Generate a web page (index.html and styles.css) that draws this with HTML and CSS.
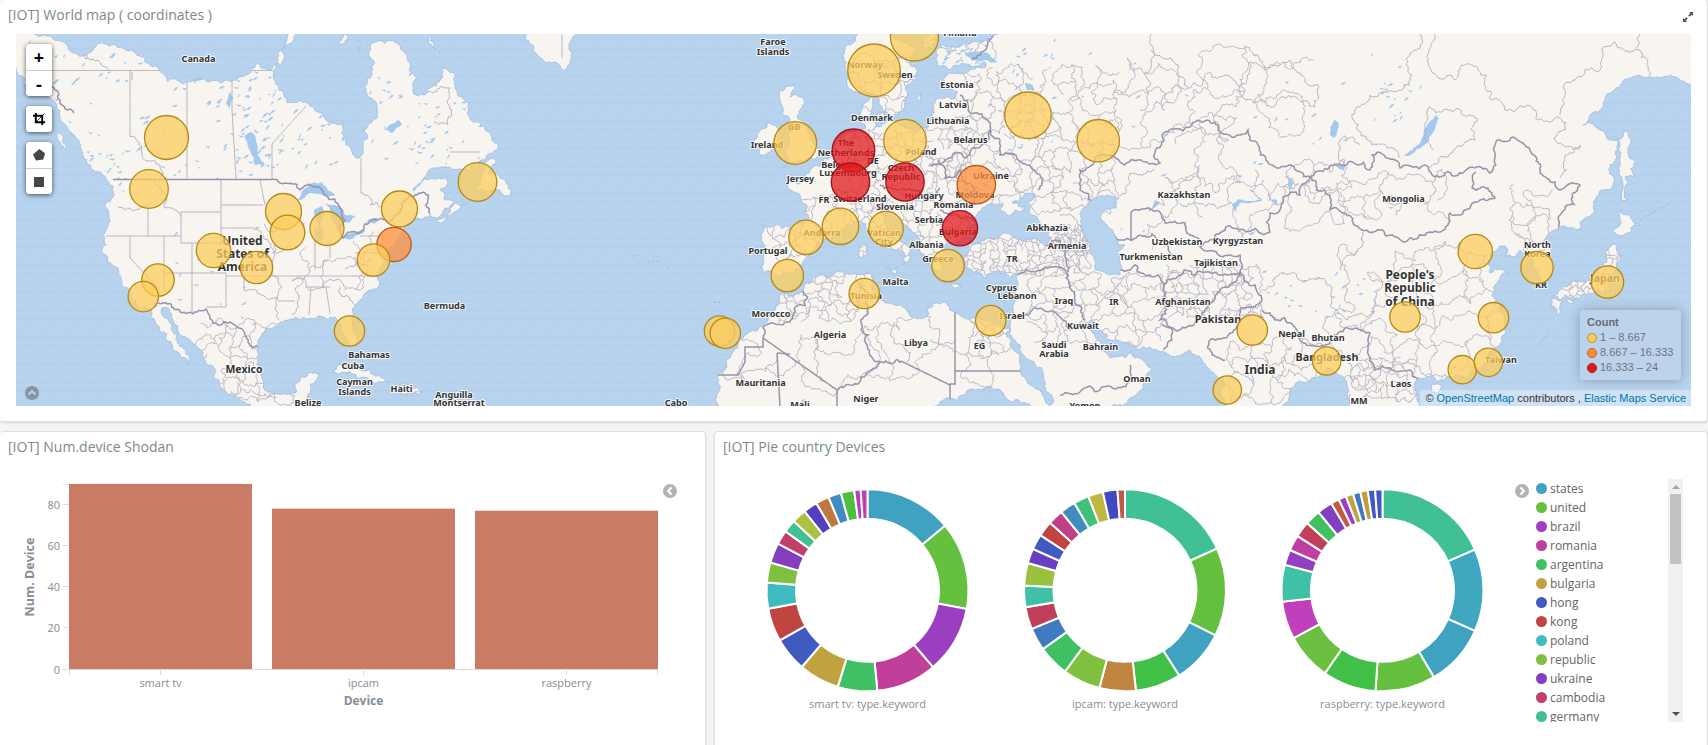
FILE: index.html
```html
<!DOCTYPE html>
<html lang="en">
<head>
<meta charset="utf-8">
<title>IOT dashboard</title>
<link rel="stylesheet" href="styles.css">
</head>
<body>
<main class="dashboard">
  <section class="panel panel-map">
    <header class="panel-head">
      <h2 class="panel-title">[IOT] World map ( coordinates )</h2>
      <svg class="expand" viewBox="0 0 12 12" width="12" height="12"><path d="M7 1h4v4L9.700 3.700 7.600 5.800 6.200 4.400 8.300 2.300zM5 11H1V7l1.300 1.300 2.100-2.100 1.400 1.400-2.100 2.100z"/></svg>
    </header>
    <div class="map">
      <svg id="map" class="map-canvas" viewBox="16 34 1675 372" width="1675" height="372"></svg>
      <div class="map-tools">
        <div class="tool-group"><button class="tool">+</button><button class="tool">-</button></div>
        <div class="tool-group"><button class="tool"><svg viewBox="0 0 12 12" width="12" height="12"><path d="M2.800 0v9.200H12M0 2.800h9.200V12" fill="none" stroke="#000" stroke-width="1.900"/><path d="M3 9l8.500-8.500" stroke="#000" stroke-width=".8"/></svg></button></div>
        <div class="tool-group"><button class="tool"><svg viewBox="0 0 12 12" width="12" height="12"><path d="M6.300 0L12 4.200 10.300 10.500 3 11.500 0 5.500z" fill="#464646"/></svg></button><button class="tool"><svg viewBox="0 0 10 10" width="10" height="10"><path d="M0 0h10v10H0z" fill="#464646"/></svg></button></div>
      </div>
      <svg class="map-toggle" viewBox="0 0 14 14" width="14" height="14"><circle cx="7" cy="7" r="7"/><path d="M3.600 8.500L7 5.200l3.400 3.300"/></svg>
      <div class="map-legend">
        <strong>Count</strong>
        <span class="legend-row"><i class="dot dot-low"></i>1 – 8.667</span>
        <span class="legend-row"><i class="dot dot-mid"></i>8.667 – 16.333</span>
        <span class="legend-row"><i class="dot dot-high"></i>16.333 – 24</span>
      </div>
      <div class="map-credit">© <a>OpenStreetMap</a> contributors , <a>Elastic Maps Service</a></div>
    </div>
  </section>
  <div class="row">
    <section class="panel panel-bars">
      <header class="panel-head"><h2 class="panel-title">[IOT] Num.device Shodan</h2></header>
      <div class="bars-body">
        <svg id="bars" class="chart" viewBox="0 460 660 280" width="660" height="280"></svg>
        <svg class="toggle" viewBox="0 0 14 14" width="14" height="14"><circle cx="7" cy="7" r="7"/><path d="M8.500 3.600L5.200 7l3.300 3.400"/></svg>
      </div>
    </section>
    <section class="panel panel-pies">
      <header class="panel-head"><h2 class="panel-title">[IOT] Pie country Devices</h2></header>
      <div class="pies-body">
        <svg id="pies" class="chart" viewBox="740 460 774 280" width="774" height="280"></svg>
        <svg class="toggle" viewBox="0 0 14 14" width="14" height="14"><circle cx="7" cy="7" r="7"/><path d="M5.500 3.600L8.800 7l-3.300 3.400"/></svg>
        <ul id="names" class="names"></ul>
        <div class="scrollbar"><i class="arrow arrow-up"></i><i class="thumb"></i><i class="arrow arrow-down"></i></div>
      </div>
    </section>
  </div>
</main>
<script src="script.js"></script>
</body>
</html>
```
FILE: styles.css
```css
* { box-sizing: border-box; }
body { margin: 0; background: #f4f4f4; font-family: "Open Sans", "Noto Sans", sans-serif; overflow: hidden; }
.dashboard { display: flex; flex-direction: column; gap: 9px; height: 745px; }
.panel { background: #fff; border: 1px solid #dedede; border-radius: 4px; box-shadow: 0 1px 2px rgba(0,0,0,.12); }
.panel-map { height: 422px; border-top: 0; border-left-color: #fff; flex: none; }
.panel-head { display: flex; justify-content: space-between; align-items: center; height: 30px; padding: 0 12px 0 7px; }
.panel-title { margin: 0; font-size: 14px; font-weight: 400; line-height: 30px; color: #7b8a8b; }
.expand { fill: #555; margin: 4px 1px 0 0; }
.map { position: relative; width: 1675px; height: 372px; margin: 4px 0 0 15px; overflow: hidden; }
.map-canvas { display: block; }
.map-tools { position: absolute; left: 10px; top: 10px; display: flex; flex-direction: column; gap: 10px; }
.tool-group { width: 26px; border-radius: 4px; background: #fff; box-shadow: 0 1px 5px rgba(0,0,0,.65); overflow: hidden; }
.tool { display: flex; align-items: center; justify-content: center; width: 26px; height: 26px; padding: 0; border: 0; background: #fff; font: bold 18px/26px "Open Sans", sans-serif; color: #000; }
.tool + .tool { border-top: 1px solid #ccc; }
.map-toggle { position: absolute; left: 9px; bottom: 6px; }
.map-toggle circle { fill: #8495a8; }
.map-toggle path { fill: none; stroke: #b8d3ee; stroke-width: 2.2; }
.map-legend { position: absolute; right: 10px; bottom: 26px; width: 101px; height: 70px; padding: 5px 7px; display: flex; flex-direction: column; background: rgba(190,211,235,.9); border-radius: 4px; box-shadow: 0 0 12px rgba(0,0,0,.25); font: 11px/15px "Liberation Sans", Arial, sans-serif; color: #6c737c; }
.map-legend strong { color: #666d76; }
.legend-row { display: flex; align-items: center; gap: 3px; white-space: nowrap; }
.dot { width: 10px; height: 10px; border-radius: 50%; flex: none; }
.dot-low { background: #fecc5c; border: 1px solid #b78f19; }
.dot-mid { background: #fd8d3c; border: 1px solid #c3601c; }
.dot-high { background: #e31a1c; border: 1px solid #a50f14; }
.map-credit { position: absolute; right: 0; bottom: 0; padding: 0 5px; font: 11px/16px "Liberation Sans", Arial, sans-serif; color: #333; background: rgba(255,255,255,.35); white-space: nowrap; }
.map-credit a { color: #0078a8; }
.map-label { font-family: "Noto Sans", sans-serif; font-weight: 700; font-size: 9.1px; fill: #333; stroke: #fff; stroke-opacity: .85; stroke-width: 2px; paint-order: stroke; stroke-linejoin: round; text-anchor: middle; }
.row { display: flex; gap: 8px; flex: 1; height: 314px; }
.panel-bars { width: 706px; height: 330px; border-left-color: #fff; }
.panel-pies { width: 994px; height: 330px; }
.panel-pies .panel-head { padding-left: 8px; }
.bars-body, .pies-body { display: flex; align-items: flex-start; }
.bars-body .chart { margin-left: -1px; }
.pies-body .chart { margin-left: 25px; }
.chart { display: block; flex: none; margin-top: -2px; }
.toggle { flex: none; margin: 22px 0 0 3px; }
.pies-body .toggle { margin-left: 1px; }
.toggle circle { fill: #b3b3b3; }
.toggle path { fill: none; stroke: #fff; stroke-width: 2.2; }
.axis-text { font-size: 11px; fill: #848e96; }
.axis-title { font-size: 12px; font-weight: 700; fill: #848e96; text-anchor: middle; }
.names { list-style: none; margin: 17px 0 0 7px; padding: 0; width: 132px; height: 243px; overflow: hidden; font-size: 12px; line-height: 19px; color: #666; }
.names li { display: flex; align-items: center; gap: 3px; height: 19px; }
.names i { width: 11px; height: 11px; border-radius: 50%; }
.scrollbar { width: 15px; height: 243px; margin-top: 17px; background: #f1f1f1; display: flex; flex-direction: column; align-items: center; }
.thumb { width: 11px; height: 70px; background: #c1c1c1; margin-top: 5px; }
.arrow { width: 0; height: 0; border: 4px solid transparent; }
.arrow-up { border-top: 0; border-bottom-color: #a3a3a3; margin-top: 6px; }
.arrow-down { border-bottom: 0; border-top-color: #505050; margin-top: auto; margin-bottom: 6px; }
```
FILE: script.js
```js
// Deterministic random numbers keep the drawn map stable between loads.
let seed = 7;
function rnd() { seed = (seed * 16807) % 2147483647; return seed / 2147483647; }

// "x,y x,y" -> points
const pts = s => s.trim().split(/\s+/).map(p => p.split(',').map(Number));

// Subdivide each segment with small offsets so that lines look surveyed.
function rough(list, amp, closed) {
  const out = [list[0]];
  const split = (a, b) => {
    const dx = b[0] - a[0], dy = b[1] - a[1], len = Math.hypot(dx, dy);
    if (len < 3) { out.push(b); return; }
    const k = (rnd() - .5) * amp;
    const m = [(a[0] + b[0]) / 2 - dy * k, (a[1] + b[1]) / 2 + dx * k];
    split(a, m); split(m, b);
  };
  const all = closed ? list.concat([list[0]]) : list;
  for (let i = 1; i < all.length; i++) split(all[i - 1], all[i]);
  return 'M' + out.map(p => p[0].toFixed(1) + ' ' + p[1].toFixed(1)).join('L') + (closed ? 'Z' : '');
}

const land = [
  // North America
  '0,20 0,60 16,68 22,76 30,88 45,95 60,118 72,133 82,155 90,165 102,174 113,186 106,208 108,225 105,238 108,262 118,268 122,280 129,290 138,308 150,310 155,322 160,332 167,334 172,345 180,356 188,365 190,360 183,348 177,335 172,325 165,318 162,308 172,318 178,326 190,340 203,352 213,366 214,378 222,388 235,396 250,404 262,420 305,420 306,400 310,385 319,376 308,374 300,378 297,390 280,394 270,392 262,378 257,365 257,350 260,338 273,328 280,322 300,320 308,319 318,316 335,317 342,325 345,336 350,346 356,345 357,335 352,320 352,310 360,300 372,290 380,282 378,272 384,262 395,245 400,238 403,230 412,223 417,218 430,215 437,218 445,208 455,203 445,200 440,190 447,185 445,178 430,179 413,191 425,177 433,168 450,167 485,160 497,150 492,138 485,130 480,123 468,115 465,100 455,88 445,67 440,80 430,88 425,95 416,95 417,78 409,70 407,55 395,42 375,42 370,45 373,60 372,75 367,84 370,98 377,110 372,122 364,130 363,147 359,158 352,152 346,142 344,123 325,118 310,106 300,100 287,103 284,95 276,84 274,75 278,60 285,45 296,34 300,20',
  '437,222 450,206 462,205 468,202 455,212 443,218',
  '475,191 492,158 496,160 488,173 500,178 508,185 512,197 505,196 500,190 488,192',
  '523,20 530,44 540,58 555,62 563,71 568,65 569,50 577,30',
  '333,371 345,366 360,369 375,376 390,382 375,383 355,374',
  '395,386 408,385 423,392 405,396',
  '338,42 343,34 348,36 343,44', '357,44 361,44 360,51', '430,36 440,52 430,44', '57,132 63,136 67,150 60,142',
  // Europe, Africa and Asia
  '868,20 855,38 845,46 843,55 845,70 847,85 853,92 865,90 872,94 876,97 880,105 887,112 900,112 905,108 908,95 907,85 915,80 918,72 910,65 912,55 924,46 930,20 940,20 938,55 937,65 950,70 970,65 985,62 985,68 960,74 944,78 945,90 958,92 955,98 940,98 933,105 933,118 928,128 915,132 905,128 893,121 880,127 872,130 876,124 870,115 873,105 873,97 862,105 860,115 866,128 858,128 850,132 843,138 835,150 825,158 820,166 810,172 805,177 800,183 787,183 788,188 800,195 806,205 808,220 804,225 790,227 775,224 762,224 763,232 765,245 763,260 763,272 772,272 778,277 785,272 800,268 806,258 815,250 818,242 828,238 838,230 850,226 860,221 868,230 880,240 895,250 905,255 905,262 902,265 910,258 907,245 900,240 893,232 883,222 880,212 885,207 890,210 900,222 912,232 920,240 922,255 930,262 935,270 940,272 940,262 948,258 942,250 948,243 962,241 966,232 972,225 977,215 985,207 993,204 1003,203 1000,209 1008,216 1025,211 1026,205 1012,202 1024,196 1034,194 1028,203 1038,220 1050,228 1050,240 1045,246 1030,240 1015,238 1000,236 985,240 968,244 966,255 968,268 980,273 985,278 1000,272 1010,278 1018,274 1018,285 1015,300 1012,318 1003,328 985,320 975,318 955,312 948,305 945,302 935,303 928,308 928,315 920,318 905,308 895,305 890,303 880,300 872,290 872,275 868,272 850,273 835,273 815,277 806,283 800,293 786,293 780,295 775,310 768,318 758,330 745,335 738,348 730,358 722,372 717,378 720,390 720,420 1050,420 1045,400 1030,385 1020,362 1010,345 1006,333 1010,328 1020,345 1030,360 1045,382 1052,395 1058,420 1100,420 1112,406 1130,398 1145,382 1152,370 1145,362 1135,358 1132,350 1125,358 1110,358 1105,352 1098,340 1085,322 1092,320 1100,330 1110,340 1130,344 1138,350 1160,352 1190,350 1200,357 1208,368 1217,377 1226,385 1232,420 1278,420 1290,395 1310,380 1325,370 1338,375 1347,385 1350,420 1430,420 1415,390 1418,378 1430,376 1438,382 1450,378 1475,370 1490,362 1500,345 1505,330 1500,310 1492,295 1495,285 1508,272 1500,269 1490,273 1488,262 1497,250 1505,246 1508,250 1505,257 1520,250 1528,255 1535,268 1540,283 1550,280 1553,270 1550,255 1545,243 1555,230 1565,226 1580,230 1595,213 1608,190 1612,175 1616,155 1617,140 1600,130 1583,125 1600,110 1615,90 1625,79 1660,78 1680,80 1710,82 1710,20',
  '785,87 795,86 790,97 802,97 800,110 797,116 808,130 815,145 820,150 815,160 795,163 783,168 790,160 783,155 790,145 788,135 790,120 783,115 780,100',
  '768,123 775,125 778,135 773,150 760,155 755,145 757,133',
  '877,115 884,112 884,120 878,120', '884,267 899,266 897,274', '861,245 867,243 866,255 861,258', '917,97 921,93 919,101',
  '951,284 962,286 952,286', '1492,362 1496,350 1499,352', '1432,384 1442,386 1438,395 1431,392',
  '1624,131 1628,148 1633,177 1626,176 1628,200 1620,203 1622,180 1620,155 1618,140',
  '1620,210 1632,220 1640,225 1628,233 1618,235 1612,232 1615,228 1621,222',
  '1612,244 1618,245 1620,255 1616,270 1610,290 1590,293 1578,300 1568,298 1553,296 1565,286 1585,283 1595,270 1607,262',
  '1553,298 1562,300 1558,315 1551,306', '1566,300 1578,297 1572,304'
];
const water = [
  '297,200 303,190 312,183 322,182 335,196 324,196 312,193',
  '314,210 322,206 325,212 321,222 323,240 315,242', '325,203 340,206 345,215 356,216 350,222 344,222 342,235 336,225 330,210',
  '342,238 355,233 366,231 352,239', '363,224 378,218 376,223',
  '1436,115 1439,118 1432,134 1412,154 1404,156 1420,143', '245,135 252,132 257,145 265,165 255,165 250,150',
  '157,52 170,48 185,34 195,36 180,48 172,57 155,60', '180,82 190,77 205,78 190,80', '226,104 230,92 234,98 229,110',
  '1232,205 1238,199 1262,199 1262,201 1240,203 1235,212', '1270,199 1277,200 1280,208', '1248,234 1258,230 1252,235',
  '1145,215 1155,200 1160,202 1148,212', '1025,83 1033,86 1034,91 1027,90', '965,54 985,52 998,62 985,60 972,60',
  '385,130 398,120 402,124 392,133', '1286,176 1292,180 1294,190 1288,186', '1330,135 1334,120 1338,122 1334,138', '1336,166 1345,164 1344,171'
];
const caspian = '1080,213 1088,203 1100,196 1115,197 1116,208 1105,210 1100,217 1108,227 1115,235 1118,245 1125,245 1117,252 1120,262 1120,275 1110,275 1095,270 1092,255 1085,235';
const thin = [
  '52,70.500 274,70.500', '130,70 130,137', '187,70 187,179', '232,34 232,110 236,179', '272,179 272,144 306,106',
  '221,180 221,245', '221,205 263,205', '181,212 221,212', '181,212 181,243 226,243', '221,228 250,228', '260,180 265,205',
  '148,208 148,236', '106,236 181,236', '130,236 130,258 160,290', '164,236 164,290', '164,273 226,273 226,307 206,307',
  '192,243 192,312', '226,276 275,276', '244,276 244,290', '305,287 330,287', '275,276 300,276', '311,287 309,315', '326,287 330,314',
  '361,158 361,193', '300,276 375,276', '315,225 315,270', '330,238 330,258', '480,152 450,152', '132,80 132,72', '562,30 562,58',
  '278,301 295,301', '360,236 385,236', '355,253 385,253'
];
const thinRough = [
  '75,34 78,45 90,60 108,70', '130,137 142,148 160,165 160,179', '154,180 165,208 181,216', '118,207 148,204', '250,228 262,235 270,247 290,247',
  '244,290 260,294 277,297 279,320', '275,245 275,276 278,300', '305,276 295,290 292,314', '361,193 370,205 383,208', '265,224 305,224',
  '427,93 450,88 452,110 448,125 434,122', '340,287 350,300 356,306', '345,268 358,262 372,258', '1092,240 1080,225 1060,215',
  '1151,34 1151,60 1146,90 1140,110', '1151,50 1170,58 1185,80 1188,88 1210,72 1240,86 1246,100 1275,106 1315,107 1318,85 1295,70 1290,60 1250,62 1240,86',
  '1165,110 1175,85 1188,88', '1420,34 1410,55 1412,75 1400,90 1370,95 1358,130 1372,145 1400,158',
  '1435,34 1438,78 1455,80 1472,65 1486,75 1492,100 1505,110 1560,118 1565,130 1555,137 1580,145 1565,160 1560,178',
  '1560,115 1565,90 1575,80 1598,72 1602,50 1615,42 1640,50 1648,60 1650,78', '1640,34 1636,48',
  '1430,168 1440,157 1475,140 1478,120 1430,107 1433,150', '1360,145 1340,140 1345,165', '1262,290 1300,280 1325,280 1330,305 1370,315 1375,300',
  '1340,270 1345,258 1360,248 1362,232', '1120,196 1128,178 1155,170', '1180,185 1165,205 1147,208', '1230,204 1180,203',
  '1255,170 1250,190 1262,200', '1200,165 1178,185', '825,335 815,350 822,382', '895,322 890,335 907,362', '930,340 955,340', '765,372 777,360'
];
const thick = [
  '113,179.500 272,179.500', '1131,240 1131,212', '955,309 955,371 1022,371', '955,371 955,384 950,384 950,406',
  '763,338 837,390', '763,338 763,347 745,347 745,362 738,375 718,375', '777,353 780,406', '777,353 790,354', '837,390 837,406', '903,362 950,385'
];
const thickRough = [
  '52,86 60,100 74,113', '272,179 280,183 300,190 312,186 325,195 340,208 345,220 343,238 360,233 365,224 378,220 400,212 415,195 428,195 430,214',
  '158,303 180,312 197,312 206,309 218,325 230,322 240,328 248,342 260,347', '763,338 763,328 790,322 795,307 805,305 803,290',
  '1092,203 1080,190 1080,170 1095,160 1115,157 1125,165 1160,163 1155,153 1162,135 1190,127 1207,120 1218,130 1235,137 1248,130 1258,145 1268,162 1290,165 1310,177 1335,165 1370,170 1372,155 1378,152 1395,160 1400,168 1425,165 1435,177 1455,176 1475,168 1490,173 1495,155 1500,140 1515,138 1530,150 1540,173 1555,182 1560,190 1580,185 1575,205 1560,215 1558,230 1545,240',
  '1310,177 1330,195 1330,210 1345,213 1362,230 1380,230 1410,238 1430,232 1448,225 1450,213 1465,210 1480,200 1495,198 1488,188 1472,188 1476,172',
  '1310,177 1300,195 1283,197 1280,210 1270,213 1270,232 1240,230 1215,235 1200,247 1220,256 1240,255 1240,272',
  '1131,212 1147,208 1165,223 1185,223 1190,235 1200,240', '1112,235 1122,240 1140,235 1160,243 1180,262',
  '1120,270 1135,265 1158,275 1163,290 1160,320 1172,340 1164,350', '1163,285 1185,270 1205,272 1220,275 1240,272 1220,290 1205,310 1195,322 1162,324',
  '1240,272 1255,285 1262,300 1240,310 1230,333 1210,340 1212,355 1225,360', '1262,310 1275,320 1300,340 1325,345 1355,328 1370,333 1368,350 1375,370 1390,368 1410,370 1418,380',
  '1018,275 1035,272 1065,270 1070,285 1075,300 1085,320', '1020,318 1040,308 1070,330 1085,325', '1060,395 1080,392 1100,390 1128,383 1130,365',
  '837,390 850,385 880,362 868,335 867,305 860,285', '880,362 903,362', '1045,245 1055,240 1065,255 1068,272',
  '990,130 1000,155 1020,162 1040,175 1038,190', '938,160 945,178 960,170 972,185 975,205', '960,95 968,110 985,118 990,130 970,155 945,160 930,165',
  '993,34 980,55 972,60', '940,210 952,215 975,222', '880,185 900,190 925,195 940,188'
];
// x0, y0, x1, y1, cell size of administrative districts
const districts = [
  [200,325,300,406,11],[300,240,385,300,24],[765,195,860,272,13],[850,130,975,260,9],[960,70,1125,215,14],[1120,60,1345,170,38],
  [968,238,1090,276,6],[1030,276,1160,345,13],[775,275,870,325,9],[720,340,1010,406,34],[1165,268,1262,320,8],[1232,345,1320,406,17],
  [1345,250,1510,372,24],[1350,360,1420,406,8],[1345,175,1450,230,20],[848,60,935,112,12],[1160,135,1300,235,42],[1290,165,1345,220,18],
  [925,40,990,62,13],[1555,240,1620,300,7],[1055,225,1095,256,4],[1515,190,1560,260,16],[395,385,425,396,4],[970,315,1010,360,10]
];
// x0, y0, x1, y1, number of small lakes
const lakeFields = [[20,36,130,170,40],[130,36,275,180,80],[235,36,285,175,60],[290,110,345,170,22],[365,60,480,190,60],[940,36,985,65,45],[985,40,1060,150,30],[1080,50,1420,250,45],[1260,270,1380,320,28],[150,215,280,330,14],[1380,80,1420,130,12],[80,150,125,190,25]];

let marks = '';
const line = (s, cls, amp) => { marks += `<path d="${rough(pts(s), amp)}" ${cls}/>`; };
const landPath = land.map(s => rough(pts(s), .5, true)).join('');
const A = 'fill="none" stroke="#b7b2c3" stroke-width="1"', B = 'fill="none" stroke="#9693aa" stroke-width="1.500"';
districts.forEach(([x0, y0, x1, y1, c]) => {
  const g = [];
  for (let y = y0; y <= y1; y += c) {
    const row = [];
    for (let x = x0; x <= x1; x += c) row.push([x + (rnd() - .5) * c * .9, y + (rnd() - .5) * c * .9]);
    g.push(row);
  }
  let d = '';
  g.forEach((row, j) => row.forEach((p, i) => {
    if (row[i + 1] && rnd() < .78) d += rough([p, row[i + 1]], .7);
    if (g[j + 1] && rnd() < .78) d += rough([p, g[j + 1][i]], .7);
  }));
  marks += `<path d="${d}" ${A} opacity=".9"/>`;
});
let lakes = water.map(s => rough(pts(s), .3, true)).join('');
lakeFields.forEach(([x0, y0, x1, y1, n]) => {
  for (let i = 0; i < n; i++) {
    const x = x0 + rnd() * (x1 - x0), y = y0 + rnd() * (y1 - y0), w = 2 + rnd() * 5, h = (rnd() - .6) * 6;
    lakes += `M${x} ${y}l${w * .5} ${h - 1}l${w * .5} ${h * .2}l${-w * .4} ${2.2 - h * .3}z`;
  }
});
marks += `<path d="${lakes}" fill="#a3caee"/>`;
thin.forEach(s => line(s, A, 0));
thinRough.forEach(s => line(s, A, .6));
thick.forEach(s => line(s, B, 0));
thickRough.forEach(s => line(s, B, .5));
marks += `<path d="${rough(pts(caspian), .3, true)}" fill="#b8d3ee" stroke="#a5c3e4"/>`;

// text, centre x, centre y, font size
const labels = [
  ['Canada',198.500,59],['United',242.500,240.500,12],['States of',242.500,253.500,12],['America',242.500,267,12],['Mexico',244,369,10.5],['Bahamas',369,355],['Cuba',353,366],['Cayman',354.500,382],['Islands',354.500,392],['Haiti',401.500,389],['Belize',308,403],['Bermuda',444.500,306],['Anguilla',454,395],['Montserrat',459,403],['Cabo',676,403],
  ['Faroe',773,42],['Islands',773,51.500],['Finland',960,33],['Norway',865,65],['Sweden',895,75],['Estonia',957,85],['Latvia',953,105],['Lithuania',948,120.500],['Denmark',872,117.500],['GB',794,127],['Ireland',767,145],['The',846,143],['Netherlands',846,153],['DE',873,161],['Belgium',840,165],['Luxembourg',848,173],['Jersey',800.500,178.500],['FR',824,199.500],['Switzerland',860,198.500],['Slovenia',895,206.500],['Hungary',924,195.500],['Czech',901,168],['Republic',901,177],['Poland',921,152],['Belarus',970.500,139.500],['Ukraine',991,175.500],['Moldova',975,194.500],['Romania',953.500,205],['Serbia',929,220],['Bulgaria',958,232],['Albania',926.500,244.500],['Andorra',822,233],['Vatican',884,233],['City',884,242],['Portugal',768,251],['Greece',938,259],['TR',1012,259],['Malta',895.500,281.500],['Abkhazia',1047,228],['Armenia',1067,246],['Cyprus',1001.500,288],['Lebanon',1017,296],['Iraq',1064,301],['Israel',1012,316],['EG',979.500,345.500],['Libya',916,342.500],['Algeria',830,334.500],['Morocco',771,313.500],['Tunisia',866,296],['Mauritania',760.500,383],['Niger',866,398.500],['Mali',800,405],['Saudi',1054,345],['Arabia',1054,354],['Kuwait',1083,326],['Bahrain',1100.500,346.500],['Yemen',1085,405.500],['IR',1114,301.500],['Oman',1137,378.500],
  ['Kazakhstan',1184,195],['Uzbekistan',1177,242],['Kyrgyzstan',1238,240.500],['Turkmenistan',1151,256.500],['Tajikistan',1216,263],['Afghanistan',1183,301.500],['Pakistan',1218,319,10.8],['India',1260,370,12],['Nepal',1291.500,334],['Bhutan',1328,337.500],['Bangladesh',1327,357,10.8],['MM',1359,401],['Mongolia',1403.500,198.500],['Laos',1401,384],['Taiwan',1501,360],["People's",1410,274.500,12],['Republic',1410,288,12],['of China',1410,301.500,12],['North',1537.500,245],['Korea',1537.500,254],['KR',1541,285],['Japan',1605,278,10.5]
];
// centre x, centre y, radius, class
const spots = [
  [166.5,137.5,22],[149,189,19.3],[283.5,211.5,18],[287.5,232.5,17.3],[327,228.5,17],[399.5,209,18],[394,244.5,17.2,1],[373.5,260,16.2],[213.5,250.5,17.2],[256.5,267.5,16.2],[158,280,16.2],[143.3,296.6,15.2],[349.5,331,15.2],[477.5,182,19.3],
  [874,70.3,26.3],[914.5,37,24],[795.3,143,21.3],[905,140.7,21.3],[853.5,150.3,21.3,2],[850.5,182,19.2,2],[905,182,19.2,2],[976.3,184.7,19.2,1],[960,228.3,17.6,2],[840.5,226.3,18.2],[886,228.7,17.3],[806,237.3,17.2],[787.3,275.5,16.2],[948,265.5,16.2],[864.3,293.5,15.2],[990.7,320.5,15.2],[719.5,331,15.2],[725.3,333.3,15.2],[1028,115.3,23.3],[1098.3,140.7,21.2],[1252.3,330,15.2],[1326.7,361,14.2],[1227.3,390,14.2],[1475.3,251.5,17.2],[1537,267.5,16.2],[1607.5,282,16.2],[1405,317,15.2],[1493.5,317.7,15.2],[1462.3,369.7,14.2],[1488.3,362.3,14.2]
];
const fills = ['#fecc5c', '#fd8d3c', '#e31a1c'], rims = ['#b38b14', '#bf5a17', '#a00f1b'];
document.getElementById('map').innerHTML =
  `<defs><clipPath id="land"><path d="${landPath}"/></clipPath><pattern id="sea" width="12" height="9" patternUnits="userSpaceOnUse"><path d="M0 4q3-2 6 0t6 0" fill="none" stroke="#aecbe9" stroke-width=".8"/></pattern></defs>` +
  `<rect x="16" y="34" width="1675" height="372" fill="#b8d3ee"/><rect x="16" y="34" width="1675" height="372" fill="url(#sea)"/>` +
  `<path d="${landPath}" fill="#f8f5f0" stroke="#a5c3e4" stroke-width="1"/><g clip-path="url(#land)">${marks}</g>` +
  `<path d="M633 256l4-1M648 262l6-1M657 261l3 0M666 267l4 1M714 302l3 1M718 303l3-1M1640 220l30-17M1540 343l10-11" stroke="#a3b3c6" fill="none" stroke-dasharray="2 2"/>` +
  labels.map(([t, x, y, s]) => `<text class="map-label" x="${x}" y="${y + (s ? 4 : 3.3)}"${s ? ` style="font-size:${s}px"` : ''}>${t}</text>`).join('') +
  spots.map(([x, y, r, k = 0]) => `<circle cx="${x}" cy="${y}" r="${r}" fill="${fills[k]}" fill-opacity=".75" stroke="${rims[k]}" stroke-width="1.300"/>`).join('');

// Bar chart
const bars = [['smart tv', 90], ['ipcam', 78], ['raspberry', 77]];
const yOf = v => 669.5 - v * 2.062;
let b = '<path d="M69 669.500H658M69.500 669v6M657.500 669v6M63 484.500h6" stroke="#ddd" fill="none"/>';
[0, 20, 40, 60, 80].forEach(v => {
  const y = Math.round(yOf(v)) - .5;
  b += `<path d="M63 ${y}h6" stroke="#ddd"/><text class="axis-text" text-anchor="end" x="60" y="${y + 4}">${v}</text>`;
});
bars.forEach(([t, v], i) => {
  const x = 69 + i * 203;
  b += `<rect x="${x}" y="${yOf(v)}" width="183" height="${v * 2.062 - .5}" fill="#ca7b66"/><path d="M${x + 91.5} 670v5" stroke="#ddd"/><text class="axis-text" text-anchor="middle" x="${x + 91.5}" y="687">${t}</text>`;
});
b += '<text class="axis-title" x="363.500" y="705">Device</text><text class="axis-title" style="font-size:12.500px" transform="translate(34 577) rotate(-90)">Num. Device</text>';
document.getElementById('bars').innerHTML = b;

// Ring charts: end angle of each slice, in degrees clockwise from the top
const rings = [
  [867.5, 'smart tv: type.keyword', [50.2,100.7,139.6,174.4,197.1,220.6,240.2,259.5,274.4,286,297.5,305.7,313.2,321.5,329.6,337.3,344.7,352.4,356.1,360],
    '3fa2c0 65c040 9b3fc0 c03f9b 40c065 c0a340 405bc0 c0443f 40bcc0 7fc040 833fc0 c03f6b 40c094 adc040 553fc0 c07640 408bc0 4dc040 b53fc0 c03fb3'],
  [1125, 'ipcam: type.keyword', [65.6,116.5,147.6,173.8,194.7,216.5,234.4,247.5,260.3,272.7,285.7,294.2,303.1,312,320.9,329.9,338.7,347.3,355.7,360],
    '40c094 65c040 3fa2c0 40c047 c08540 7fc040 40c065 407bc0 c03f5b 40c0a6 9ac040 683fc0 405bc0 c0443f c03f88 408bc0 40c079 c0b640 4049c0 c05a40'],
  [1382.5, 'raspberry: type.keyword', [66.2,113.7,149.4,184,214.8,241.7,263.5,284.6,293.5,302.6,311.7,320.7,329.5,334.3,338.7,343,347.3,351.6,355.8,360],
    '40c094 3fa8c0 3fa2c0 65c040 40c047 6cc040 c03fbb 40c0a6 933fc0 c03fa0 c03f5b 40c060 833fc0 c05a40 9b3fc0 c0a340 407bc0 c09e40 405bc0 405bc0']
];
let r = '';
rings.forEach(([cx, name, ends, colors]) => {
  const cy = 590.3, at = (a, q) => [cx + q * Math.sin(a * Math.PI / 180), cy - q * Math.cos(a * Math.PI / 180)].map(n => n.toFixed(2)).join(' ');
  let from = 0;
  colors.split(' ').forEach((c, i) => {
    const to = ends[i];
    r += `<path d="M${at(from, 101)}A101 101 0 0 1 ${at(to, 101)}L${at(to, 71.5)}A71.500 71.500 0 0 0 ${at(from, 71.5)}Z" fill="#${c}" stroke="#fff" stroke-width="2"/>`;
    from = to;
  });
  r += `<text class="axis-text" text-anchor="middle" x="${cx}" y="708">${name}</text>`;
});
document.getElementById('pies').innerHTML = r;

const names = { states: '3fa2c0', united: '65c040', brazil: '9b3fc0', romania: 'c03f9b', argentina: '40c065', bulgaria: 'c0a340', hong: '405bc0', kong: 'c0443f', poland: '40bcc0', republic: '7fc040', ukraine: '833fc0', cambodia: 'c03f6b', germany: '40c094' };
document.getElementById('names').innerHTML = Object.entries(names).map(([n, c]) => `<li><i style="background:#${c}"></i>${n}</li>`).join('');
```
